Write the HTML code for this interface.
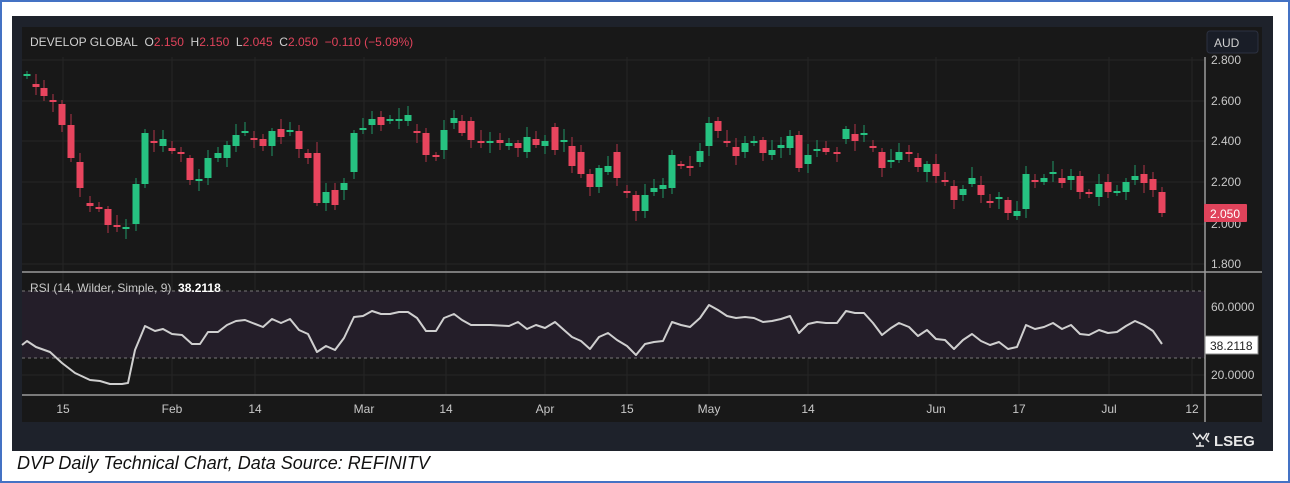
<!DOCTYPE html>
<html><head><meta charset="utf-8"><style>
html,body{margin:0;padding:0;background:#fff;}
body{width:1290px;height:483px;position:relative;overflow:hidden;font-family:"Liberation Sans","DejaVu Sans",sans-serif;}
.frame{position:absolute;left:0;top:0;width:1286px;height:479px;border:2px solid #4472c4;}
.cap{position:absolute;left:17px;top:453px;font-size:18px;font-style:italic;color:#111;font-family:"Liberation Sans","DejaVu Sans",sans-serif;}
svg{position:absolute;left:0;top:0}
</style></head><body>
<div class="frame"></div>
<svg id="s" width="1290" height="483" viewBox="0 0 1290 483" font-family="Liberation Sans, DejaVu Sans, sans-serif">
<rect x="12" y="16" width="1261" height="435" fill="#1e222b"/>
<rect x="22" y="27" width="1240" height="395" fill="#181818"/>
<g id="grid" stroke="#262626" stroke-width="1"></g>
<rect x="22" y="291" width="1183" height="67" fill="#241e29"/>
<line x1="22" y1="291" x2="1205" y2="291" stroke="#777" stroke-dasharray="3,3"/>
<line x1="22" y1="358" x2="1205" y2="358" stroke="#777" stroke-dasharray="3,3"/>
<line x1="22" y1="272" x2="1262" y2="272" stroke="#9a9a9a" stroke-width="1.5"/>
<line x1="22" y1="395" x2="1262" y2="395" stroke="#9a9a9a" stroke-width="1.5"/>
<line x1="1205" y1="57" x2="1205" y2="422" stroke="#9a9a9a" stroke-width="1.5"/>
<g id="candles"></g>
<polyline id="rsi" fill="none" stroke="#cfcfcf" stroke-width="2" stroke-linejoin="round"/>
<g font-size="12" fill="#c8c8c8">
<text x="1211" y="64">2.800</text><text x="1211" y="105">2.600</text><text x="1211" y="145">2.400</text><text x="1211" y="186">2.200</text><text x="1211" y="228">2.000</text><text x="1211" y="268">1.800</text>
<text x="1211" y="311">60.0000</text><text x="1211" y="379">20.0000</text>
</g>
<rect x="1207" y="31" width="51" height="22" rx="3" fill="#191d27" stroke="#2c3140"/>
<text x="1214" y="47" font-size="12" fill="#d0d0d0">AUD</text>
<rect x="1204" y="204" width="43" height="18" rx="1" fill="#e0435b"/>
<text x="1210" y="218" font-size="12" fill="#fff">2.050</text>
<rect x="1205" y="336" width="53" height="18" fill="#fff" stroke="#888"/>
<text x="1210" y="350" font-size="12" fill="#222">38.2118</text>
<text x="30" y="46" font-size="12" fill="#d0d0d0">DEVELOP GLOBAL&#160;&#160;O<tspan fill="#e0435b">2.150</tspan>&#160;&#160;H<tspan fill="#e0435b">2.150</tspan>&#160;&#160;L<tspan fill="#e0435b">2.045</tspan>&#160;&#160;C<tspan fill="#e0435b">2.050</tspan>&#160;&#160;<tspan fill="#e0435b">−0.110 (−5.09%)</tspan></text>
<text x="30" y="292" font-size="12" fill="#c8c8c8">RSI (14, Wilder, Simple, 9)&#160;&#160;<tspan fill="#fff" font-weight="bold">38.2118</tspan></text>
<g font-size="12" fill="#c8c8c8" text-anchor="middle" id="tl">
<text x="63" y="413">15</text><text x="172" y="413">Feb</text><text x="255" y="413">14</text><text x="364" y="413">Mar</text><text x="446" y="413">14</text><text x="545" y="413">Apr</text><text x="627" y="413">15</text><text x="709" y="413">May</text><text x="808" y="413">14</text><text x="936" y="413">Jun</text><text x="1019" y="413">17</text><text x="1109" y="413">Jul</text><text x="1192" y="413">12</text>
</g>
<g fill="none" stroke="#e8e8e8" stroke-width="1.5"><path d="M1193 433l4 6 3-4 3 4 4-6M1200 442v4M1196 446h8"/><path d="M1209 433l-3 6 3 3"/></g>
<text x="1214" y="446" font-size="15" font-weight="bold" fill="#e8e8e8">LSEG</text>
</svg>
<div class="cap">DVP Daily Technical Chart, Data Source: REFINITV</div>
<script>
var NS="http://www.w3.org/2000/svg";
function el(p,t,a){var e=document.createElementNS(NS,t);for(var k in a)e.setAttribute(k,a[k]);p.appendChild(e);return e;}
var g=document.getElementById('grid');
[63,172,255,364,446,545,627,709,808,936,1019,1109,1192].forEach(function(x){el(g,'line',{x1:x,y1:57,x2:x,y2:395});});
[60,101,141,182,224,264,307,341,375].forEach(function(y){el(g,'line',{x1:22,y1:y,x2:1205,y2:y});});
var C=[[27,74,76,'g'],[36,84,87,'r'],[44,88,96,'r'],[53,100,102,'r'],[62,104,125,'r'],[71,125,158,'r'],[80,162,188,'r'],[90,203,206,'r'],[99,207,209,'r'],[108,209,225,'r'],[117,225,227,'r'],[126,227,229,'g'],[136,184,224,'g'],[145,133,184,'g'],[154,141,143,'r'],[163,139,146,'g'],[172,148,151,'r'],[181,152,154,'r'],[190,158,180,'r'],[199,179,181,'g'],[208,158,178,'g'],[218,153,158,'g'],[227,145,158,'g'],[236,135,146,'g'],[245,131,133,'g'],[254,138,140,'r'],[263,139,146,'r'],[272,131,146,'g'],[281,129,137,'r'],[290,130,132,'g'],[299,131,149,'r'],[308,153,158,'r'],[317,153,203,'r'],[326,192,203,'g'],[335,190,205,'r'],[344,183,190,'g'],[354,133,172,'g'],[363,128,130,'g'],[372,119,125,'g'],[381,117,125,'r'],[390,119,121,'g'],[399,119,121,'g'],[408,115,121,'g'],[417,131,133,'r'],[426,133,155,'r'],[436,155,157,'r'],[444,130,150,'g'],[454,118,123,'g'],[462,121,133,'r'],[471,121,140,'r'],[481,141,143,'r'],[490,141,143,'g'],[500,140,143,'r'],[509,143,146,'g'],[518,143,148,'r'],[527,137,152,'g'],[536,139,145,'r'],[545,141,146,'g'],[555,127,150,'r'],[564,140,142,'g'],[572,146,166,'r'],[581,152,174,'r'],[590,174,187,'r'],[599,168,187,'g'],[608,166,172,'g'],[617,152,178,'r'],[627,191,193,'r'],[636,195,211,'r'],[645,195,211,'g'],[654,188,192,'g'],[663,185,189,'g'],[672,155,188,'g'],[681,164,166,'r'],[690,166,168,'r'],[700,151,162,'g'],[709,123,146,'g'],[718,121,131,'r'],[727,141,143,'r'],[736,147,156,'r'],[745,143,152,'g'],[754,141,143,'g'],[763,140,153,'r'],[772,150,155,'g'],[781,145,148,'g'],[790,136,148,'g'],[799,135,168,'r'],[808,155,164,'g'],[817,149,151,'g'],[826,148,152,'r'],[837,152,154,'r'],[846,129,139,'g'],[855,134,141,'r'],[864,133,135,'g'],[873,146,148,'r'],[882,152,168,'r'],[891,160,162,'g'],[899,152,160,'g'],[909,152,154,'r'],[918,158,167,'r'],[927,164,172,'g'],[936,164,176,'r'],[945,180,182,'r'],[954,186,200,'r'],[963,189,195,'g'],[972,178,184,'g'],[981,185,195,'r'],[990,201,203,'r'],[999,197,199,'g'],[1008,200,213,'r'],[1017,211,216,'g'],[1026,174,209,'g'],[1035,180,182,'r'],[1044,178,182,'g'],[1053,172,174,'g'],[1062,178,183,'r'],[1071,176,180,'g'],[1080,176,192,'r'],[1089,192,194,'r'],[1099,184,197,'g'],[1108,182,192,'r'],[1117,191,193,'g'],[1126,182,192,'g'],[1135,176,180,'g'],[1144,174,183,'r'],[1153,179,190,'r'],[1162,192,213,'r']];
var cg=document.getElementById('candles');
C.forEach(function(c,i){var col=c[3]=='g'?'#26c281':'#e8455e';var wc=c[3]=='g'?'#1f7a55':'#8e2f3e';
var wt=c[1]-3-(i*7%9),wb=c[2]+3+(i*5%8);
el(cg,'line',{x1:c[0],y1:wt,x2:c[0],y2:wb,stroke:wc,'stroke-width':1.3});
el(cg,'rect',{x:c[0]-3.5,y:c[1],width:7,height:Math.max(2,c[2]-c[1]),fill:col});});
var R=[[22,345],[27,341],[36,347],[50,352],[62,363],[75,373],[90,380],[100,381],[110,384],[122,384],[128,383],[135,350],[145,326],[155,331],[163,329],[172,334],[182,335],[192,344],[200,344],[208,332],[218,332],[227,325],[236,321],[245,320],[263,327],[272,319],[281,323],[290,319],[299,330],[308,334],[317,352],[326,346],[335,350],[344,338],[354,317],[363,316],[372,311],[381,314],[390,314],[399,312],[408,312],[417,318],[426,331],[436,331],[444,318],[454,314],[462,320],[471,325],[490,325],[509,326],[518,322],[527,329],[536,325],[545,328],[555,322],[564,330],[572,337],[581,341],[590,349],[599,337],[608,333],[617,340],[627,346],[636,355],[645,344],[654,342],[663,341],[672,322],[681,325],[690,327],[700,318],[709,305],[718,310],[727,316],[736,318],[745,317],[754,318],[763,322],[772,321],[781,319],[790,316],[799,333],[808,324],[817,322],[826,323],[837,323],[846,311],[855,313],[864,313],[873,323],[882,335],[891,328],[899,323],[909,327],[918,336],[927,330],[936,339],[945,340],[954,349],[963,340],[972,334],[981,341],[990,345],[999,342],[1008,349],[1017,347],[1026,325],[1035,329],[1044,327],[1053,323],[1062,329],[1071,325],[1080,334],[1089,335],[1099,330],[1108,333],[1117,332],[1126,326],[1135,321],[1144,325],[1153,331],[1162,344]];
document.getElementById('rsi').setAttribute('points',R.map(function(p){return p.join(',')}).join(' '));
</script>
</body></html>
